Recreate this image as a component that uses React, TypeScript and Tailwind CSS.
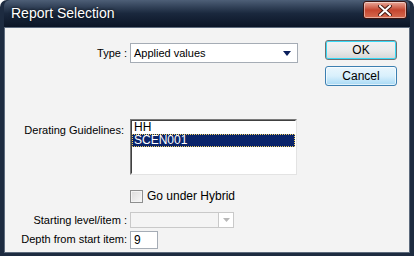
import React from 'react';

const font = { fontFamily: '"Liberation Sans", Arial, sans-serif' };

function TitleBar() {
  return (
    <div className="flex h-[27px] items-start justify-between rounded-t-[6px] bg-gradient-to-b from-[#4e5f77] via-[#1a283d] to-[#0b1526] pl-[7px] pr-[3px]">
      <span className="mt-[5px] text-[14px] leading-[17px] text-white [text-shadow:0_0_3px_#000]">Report Selection</span>
      <button className="mt-[1px] flex h-[18px] w-[44px] items-center justify-center rounded-[3px] border border-[#3a1410] bg-gradient-to-b from-[#e8a89a] via-[#c4452f] to-[#d76a4f] shadow-[inset_0_0_0_1px_rgba(255,255,255,0.45)]">
        <svg width="14" height="11" viewBox="0 0 14 11">
          <path d="M2 1 L12 10 M12 1 L2 10" stroke="#4a1a12" strokeWidth="4" strokeLinecap="square" />
          <path d="M2 1 L12 10 M12 1 L2 10" stroke="#ffffff" strokeWidth="2" strokeLinecap="square" />
        </svg>
      </button>
    </div>
  );
}

function Label({ children, pr = 'pr-0' }: { children: React.ReactNode; pr?: string }) {
  return <div className={`w-[122px] shrink-0 text-right ${pr}`}>{children}</div>;
}

export default function App() {
  return (
    <div className="h-[256px] w-[414px] bg-white text-[11px] text-black" style={font}>
      <div className="flex h-full w-full flex-col rounded-t-[7px] bg-[#1d2b40] pb-[3px] pl-[4px] pr-[4px]">
        <TitleBar />
        <div className="relative flex flex-1 border border-[#5d6b7d] bg-[#f3f3f3]">
          <div className="flex flex-col">
            {/* Type */}
            <div className="mt-[15px] flex items-center gap-[3px]">
              <Label>Type :</Label>
              <div className="flex h-[20px] w-[168px] items-center justify-between border border-[#a5acb5] bg-white pl-[3px] pr-[6px]">
                <span>Applied values</span>
                <svg width="8" height="5" viewBox="0 0 8 5">
                  <path d="M0 0 L8 0 L4 5 Z" fill="#0a1f5c" />
                </svg>
              </div>
            </div>

            {/* Derating */}
            <div className="mt-[56px] flex items-start gap-[3px]">
              <Label pr="pr-[3px]">
                <div className="mt-[3px]">Derating Guidelines:</div>
              </Label>
              <div className="h-[56px] w-[167px] border border-t-[#7a7a7a] border-l-[#7a7a7a] border-r-[#e3e3e3] border-b-[#e3e3e3] bg-white">
                <div className="h-full border border-t-[#404040] border-l-[#404040] border-r-white border-b-white">
                  <div className="h-[13px] px-[2px] text-[12px] leading-[13px]">HH</div>
                  <div className="h-[13px] border border-dotted border-[#f0d060] bg-[#0a246a] px-[1px] text-[12px] leading-[11px] text-white">SCEN001</div>
                </div>
              </div>
            </div>

            {/* Checkbox */}
            <div className="mt-[12px] flex items-center gap-[3px]">
              <div className="w-[122px] shrink-0" />
              <div className="h-[13px] w-[13px] border border-[#8e8f8f] bg-gradient-to-br from-[#dcdcdc] to-[#f8f8f8] shadow-[inset_0_0_0_1px_#f4f4f4]" />
              <span className="ml-[1px] text-[12px]">Go under Hybrid</span>
            </div>

            {/* Starting level */}
            <div className="mt-[7px] flex items-center gap-[3px]">
              <Label>Starting level/item :</Label>
              <div className="flex h-[16px] w-[104px] border border-[#c9c9c9] bg-[#f4f4f4]">
                <div className="flex-1" />
                <div className="flex w-[15px] items-center justify-center border-l border-[#c9c9c9] bg-white">
                  <svg width="7" height="4" viewBox="0 0 7 4">
                    <path d="M0 0 L7 0 L3.5 4 Z" fill="#b8b8b8" />
                  </svg>
                </div>
              </div>
            </div>

            {/* Depth */}
            <div className="mt-[2px] flex items-center gap-[3px]">
              <Label>Depth from start item:</Label>
              <div className="flex h-[18px] w-[28px] items-center border border-[#a5acb5] bg-white pl-[3px] text-[12px]">9</div>
            </div>
          </div>

          {/* Buttons */}
          <div className="ml-auto mr-[12px] mt-[12px] flex flex-col gap-[6px]">
            <button className="flex h-[20px] w-[72px] items-center justify-center rounded-[3px] border border-[#707070] bg-gradient-to-b from-[#f2f2f2] via-[#ebebeb] to-[#d6d6d6] text-[12px] shadow-[inset_0_0_0_1px_#38d8f5]">
              OK
            </button>
            <button className="flex h-[20px] w-[72px] items-center justify-center rounded-[3px] border border-[#3c7fb1] bg-gradient-to-b from-[#eaf6fd] via-[#d9f0fc] to-[#a7d9f5] text-[12px] shadow-[inset_0_0_0_1px_#ffffffa0]">
              Cancel
            </button>
          </div>
        </div>
      </div>
    </div>
  );
}
